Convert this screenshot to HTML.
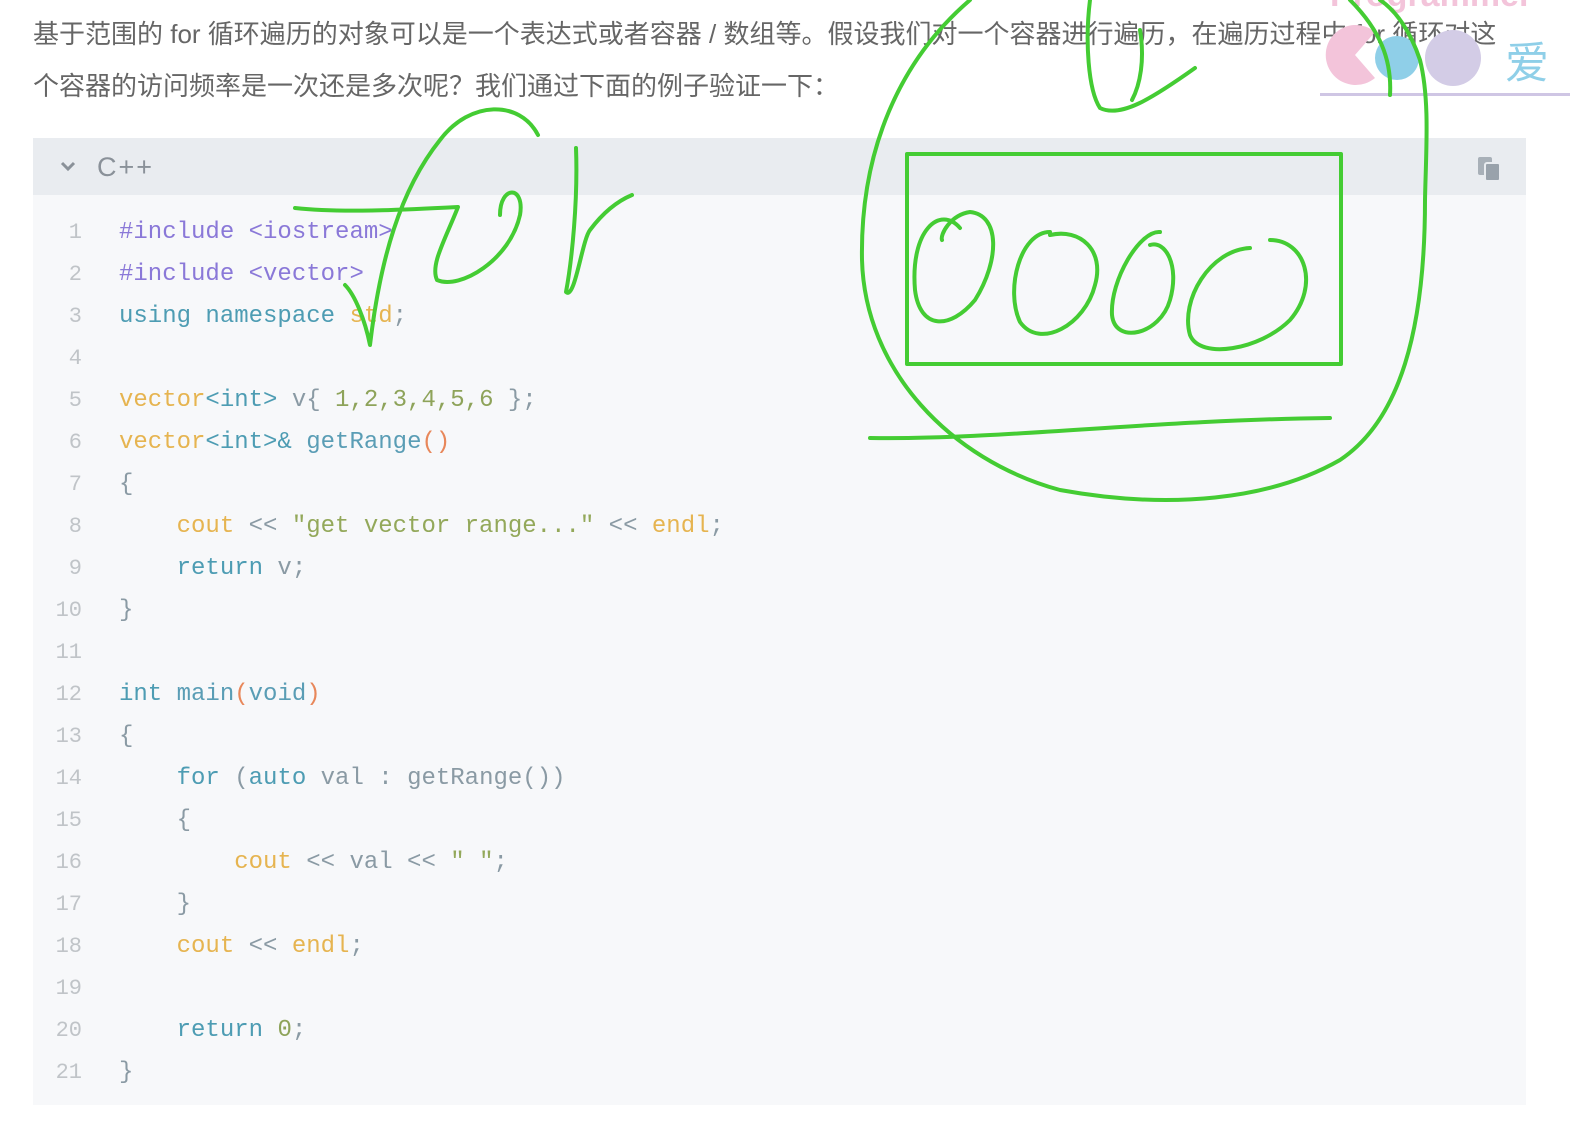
<!DOCTYPE html>
<html><head><meta charset="utf-8"><style>
html,body{margin:0;padding:0;background:#fff;width:1570px;height:1144px;overflow:hidden;position:relative}
.p{position:absolute;left:33px;font-family:"Liberation Sans","Noto Sans CJK SC",sans-serif;font-size:26px;color:#666;white-space:nowrap}
.box{position:absolute;left:33px;top:138px;width:1493px;height:967px;background:#f7f8fa}
.hdr{position:absolute;left:0;top:0;width:100%;height:57px;background:#e9ecf0}
.lang{position:absolute;left:64px;top:14px;font-family:"Liberation Sans",sans-serif;font-size:27px;color:#8a9199;letter-spacing:2px}
.code{position:absolute;left:0;top:212px;font-family:"Liberation Mono","DejaVu Sans Mono",monospace;font-size:24px;line-height:42px;white-space:pre;color:#8a9aa4}
.ln{position:absolute;width:82px;text-align:right;color:#c0c4c8;font-family:"Liberation Mono",monospace;font-size:22px}
.pp{color:#8a78d8}.kw{color:#4d9cb3}.ty{color:#e6b450}.num{color:#8ea35a}.str{color:#93a85a}.fn{color:#5a9db5}.par{color:#e8875a}.op{color:#8a9aa4}
</style></head><body>
<div class="p" style="top:14px">基于范围的 for 循环遍历的对象可以是一个表达式或者容器 / 数组等。假设我们对一个容器进行遍历，在遍历过程中 for 循环对这</div>
<div class="p" style="top:66px">个容器的访问频率是一次还是多次呢？我们通过下面的例子验证一下：</div>
<svg style="position:absolute;left:1320px;top:0" width="250" height="100">
<path d="M55 32 A30 30 0 1 0 55 78 L35 55 Z" fill="#f3c4da"/>
<circle cx="77" cy="58" r="22" fill="#8fcfe8"/>
<circle cx="133" cy="58" r="28" fill="#d3cce6"/>
<text x="185" y="78" font-size="44" fill="#8fcfe8" font-family="Noto Sans CJK SC,sans-serif">爱</text>
<text x="10" y="6" font-size="34" fill="#f3c4da" font-weight="bold" font-family="Liberation Sans,sans-serif">Programmer</text>
<rect x="0" y="93" width="250" height="3" fill="#cfc6e4"/>
</svg>
<div class="box">
<div class="hdr"></div>
<svg style="position:absolute;left:26px;top:22px" width="18" height="14"><path d="M3 3 L9 9 L15 3" stroke="#8a9199" stroke-width="3" fill="none"/></svg>
<div class="lang">C++</div>
<svg style="position:absolute;left:1443px;top:15px" width="28" height="30"><rect x="2" y="4" width="14" height="18" rx="2" fill="#a8b0b8"/><rect x="9" y="10" width="15" height="18" rx="2" fill="#99a2ab" stroke="#e9ecf0" stroke-width="2"/></svg>
</div>
<div class="code">
<div class="ln" style="top:0">1</div><div class="ln" style="top:42px">2</div><div class="ln" style="top:84px">3</div><div class="ln" style="top:126px">4</div><div class="ln" style="top:168px">5</div><div class="ln" style="top:210px">6</div><div class="ln" style="top:252px">7</div><div class="ln" style="top:294px">8</div><div class="ln" style="top:336px">9</div><div class="ln" style="top:378px">10</div><div class="ln" style="top:420px">11</div><div class="ln" style="top:462px">12</div><div class="ln" style="top:504px">13</div><div class="ln" style="top:546px">14</div><div class="ln" style="top:588px">15</div><div class="ln" style="top:630px">16</div><div class="ln" style="top:672px">17</div><div class="ln" style="top:714px">18</div><div class="ln" style="top:756px">19</div><div class="ln" style="top:798px">20</div><div class="ln" style="top:840px">21</div>
<div style="position:absolute;left:119px;top:0"><span class="pp">#include &lt;iostream&gt;</span>
<span class="pp">#include &lt;vector&gt;</span>
<span class="kw">using namespace</span> <span class="ty">std</span>;

<span class="ty">vector</span><span class="kw">&lt;int&gt;</span> v{ <span class="num">1,2,3,4,5,6</span> };
<span class="ty">vector</span><span class="kw">&lt;int&gt;&amp;</span> <span class="fn">getRange</span><span class="par">()</span>
{
    <span class="ty">cout</span> &lt;&lt; <span class="str">"get vector range..."</span> &lt;&lt; <span class="ty">endl</span>;
    <span class="kw">return</span> v;
}

<span class="kw">int</span> <span class="fn">main</span><span class="par">(</span><span class="fn">void</span><span class="par">)</span>
{
    <span class="kw">for</span> (<span class="kw">auto</span> val : getRange())
    {
        <span class="ty">cout</span> &lt;&lt; val &lt;&lt; <span class="str">" "</span>;
    }
    <span class="ty">cout</span> &lt;&lt; <span class="ty">endl</span>;

    <span class="kw">return</span> <span class="num">0</span>;
}</div></div>
<svg style="position:absolute;left:0;top:0" width="1570" height="1144" fill="none" stroke="#44cc33" stroke-width="4" stroke-linecap="round" stroke-linejoin="round">
<path d="M538 135 C520 100 470 100 440 140 C400 190 380 260 370 345 C365 320 355 295 345 285"/>
<path d="M295 208 C340 213 400 210 458 207 C445 240 430 265 437 280 C460 290 510 260 520 215 C525 185 500 185 500 215"/>
<path d="M576 148 C578 200 572 260 566 292 C575 300 582 240 590 230 C605 210 620 200 632 195"/>
<rect x="907" y="154" width="434" height="210"/>
<path d="M960 228 C940 205 910 230 915 290 C920 330 950 330 975 300 C1000 260 1000 215 970 212 C950 215 940 235 942 240"/>
<path d="M1050 232 C1020 232 1005 290 1020 322 C1040 350 1085 325 1095 285 C1105 250 1080 228 1050 235"/>
<path d="M1160 232 C1140 230 1110 280 1112 315 C1115 345 1160 335 1170 300 C1180 265 1165 240 1150 245"/>
<path d="M1250 248 C1210 250 1180 300 1190 335 C1200 360 1260 350 1290 320 C1320 285 1305 240 1270 240"/>
<path d="M1090 0 C1085 40 1088 90 1100 108 C1120 118 1150 100 1195 68 M1140 30 C1145 60 1140 85 1132 100"/>
<path d="M970 0 C900 60 860 150 862 260 C865 370 950 460 1060 490 C1170 510 1270 500 1340 460 C1400 420 1425 330 1425 200 C1426 150 1430 100 1420 60 C1410 30 1395 10 1380 0"/>
<path d="M1350 0 C1380 30 1392 60 1390 95"/>
<path d="M870 438 C1000 440 1150 420 1330 418"/>
</svg>
</body></html>
